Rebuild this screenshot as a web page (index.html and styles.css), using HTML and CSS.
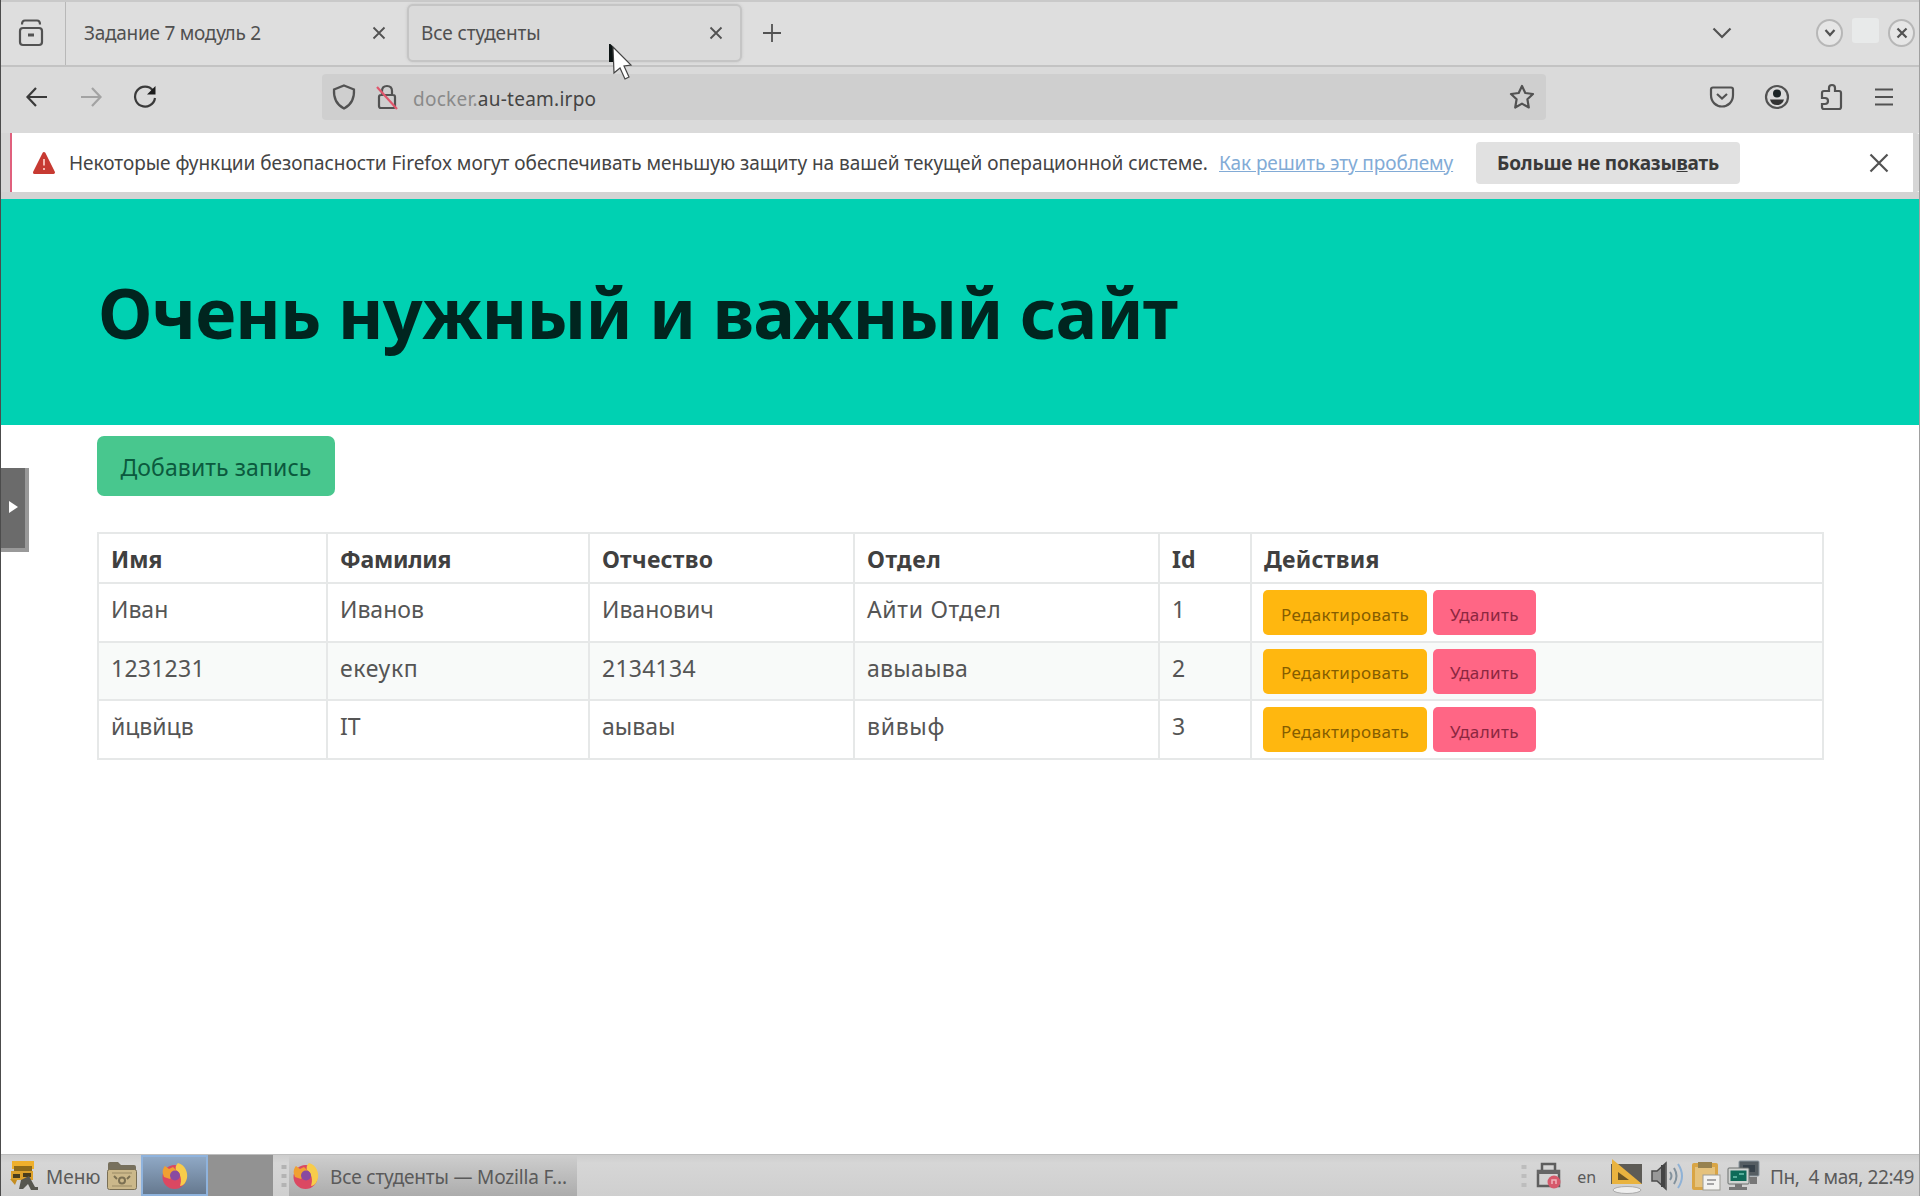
FILE: index.html
```html
<!DOCTYPE html>
<html lang="ru">
<head>
<meta charset="utf-8">
<title>Все студенты</title>
<link rel="stylesheet" href="styles.css">
</head>
<body>
<div class="screen">
  <div class="tabbar">
    <div class="history-btn">
      <svg width="26" height="32" viewBox="0 0 26 32" class="ico"><path d="M4 6.5Q4 2.500 7 2.500H19Q22 2.500 22 6.500M5 10H21Q24 10 24 13V24Q24 27 21 27H5Q2 27 2 24V13Q2 10 5 10Z"/><path d="M10 17H16" stroke-width="3"/></svg>
    </div>
    <div class="tab">
      <span class="t tab-one">Задание 7 модуль 2</span>
      <svg width="14" height="14" viewBox="0 0 14 14" class="ico thin"><path d="M1.500 1.500L12.500 12.500M12.500 1.500L1.500 12.500"/></svg>
    </div>
    <div class="tab active">
      <span class="t tab-two">Все студенты</span>
      <svg width="14" height="14" viewBox="0 0 14 14" class="ico thin"><path d="M1.500 1.500L12.500 12.500M12.500 1.500L1.500 12.500"/></svg>
    </div>
    <svg width="20" height="20" viewBox="0 0 20 20" class="ico thin new-tab"><path d="M10 1V19M1 10H19"/></svg>
    <svg width="20" height="12" viewBox="0 0 20 12" class="ico all-tabs"><path d="M1.500 1.500L10 10L18.500 1.500"/></svg>
    <div class="window-btns">
      <span class="wbtn"><svg width="12" height="8" viewBox="0 0 12 8" class="ico"><path d="M1.500 1L6 6L10.500 1"/></svg></span>
      <span class="wsquare"></span>
      <span class="wbtn"><svg width="12" height="12" viewBox="0 0 12 12" class="ico"><path d="M1.500 1.500L10.500 10.500M10.500 1.500L1.500 10.500"/></svg></span>
    </div>
  </div>

  <div class="toolbar">
    <svg width="24" height="22" viewBox="0 0 24 22" class="ico dark back"><path d="M22 11H2.500M11 2L2.500 11L11 20"/></svg>
    <svg width="24" height="22" viewBox="0 0 24 22" class="ico faded forward"><path d="M2 11H21.500M13 2L21.500 11L13 20"/></svg>
    <svg width="26" height="26" viewBox="0 0 26 26" class="ico dark reload"><path d="M21 6.500A10 10 0 1 0 23 14"/><path d="M23.500 2V10.500H15Z" fill="#1c1c1c" stroke="none"/></svg>
    <div class="urlbar">
      <svg width="24" height="26" viewBox="0 0 24 26" class="ico"><path d="M12 1.500L22 5.500C22.500 14 19 21 12 24.500C5 21 1.500 14 2 5.500Z"/></svg>
      <svg width="24" height="28" viewBox="0 0 24 28" class="ico lock"><path d="M7 12V8Q7 3 12 3Q17 3 17 8V12M6 12H18Q20 12 20 14V23Q20 25 18 25H6Q4 25 4 23V14Q4 12 6 12Z"/><path d="M2 4L22 26" stroke="#e0566c"/></svg>
      <span class="t url"><span class="url-sub">docker.</span>au-team.irpo</span>
      <svg width="26" height="26" viewBox="0 0 26 26" class="ico star"><path d="M13 2L16.300 9L24 10L18.400 15.300L19.800 23.500L13 19.600L6.200 23.500L7.600 15.300L2 10L9.700 9Z" stroke-linejoin="round"/></svg>
    </div>
    <div class="actions">
      <svg width="26" height="24" viewBox="0 0 26 24" class="ico"><path d="M4 2.500H22Q24 2.500 24 4.500V10C24 17 19 21.500 13 21.500S2 17 2 10V4.500Q2 2.500 4 2.500Z"/><path d="M8 9L13 13.500L18 9"/></svg>
      <svg width="26" height="26" viewBox="0 0 26 26" class="ico"><circle cx="13" cy="13" r="11"/><circle cx="13" cy="9.500" r="4" fill="#1c2426" stroke="none"/><path d="M6 15.500H20Q18.500 21 13 21T6 15.500Z" fill="#333" stroke="none"/></svg>
      <svg width="26" height="28" viewBox="0 0 26 28" class="ico"><path d="M3 10Q3 8 5 8H10V5Q10 2 13 2T16 5V8H20Q22 8 22 10V24Q22 26 20 26H5Q3 26 3 24V21H6Q9 21 9 18T6 15H3Z"/></svg>
      <svg width="20" height="20" viewBox="0 0 20 20" class="ico"><path d="M1 2.500H19M1 10H19M1 17.500H19"/></svg>
    </div>
  </div>

  <div class="notice">
    <svg width="24" height="24" viewBox="0 0 24 24"><path d="M12 2.500L21.500 21.500H2.500Z" fill="#c73a32" stroke="#c73a32" stroke-width="3" stroke-linejoin="round"/><path d="M12 8V14.500M12 17V19" stroke="#f3b8b0" stroke-width="2"/></svg>
    <span class="t notice-text">Некоторые функции безопасности Firefox могут обеспечивать меньшую защиту на вашей текущей операционной системе.</span>
    <a class="t notice-link">Как решить эту проблему</a>
    <span class="notice-btn"><span class="t notice-label">Больше не показы<u>в</u>ать</span></span>
    <svg width="20" height="20" viewBox="0 0 20 20" class="ico notice-close"><path d="M1.500 1.500L18.500 18.500M18.500 1.500L1.500 18.500"/></svg>
  </div>

  <div class="page">
    <div class="hero"><h1 class="t hero-title">Очень нужный и важный сайт</h1></div>
    <div class="content">
      <span class="add-btn"><span class="t add-label">Добавить запись</span></span>
      <table class="grid">
        <colgroup><col class="c1"><col class="c2"><col class="c3"><col class="c4"><col class="c5"><col class="c6"></colgroup>
        <tr class="head"><th>Имя</th><th class="snug">Фамилия</th><th class="loose">Отчество</th><th class="wide">Отдел</th><th>Id</th><th class="loose">Действия</th></tr>
        <tr><td>Иван</td><td>Иванов</td><td>Иванович</td><td class="wide">Айти Отдел</td><td>1</td><td><div class="row-btns"><span class="btn edit">Редактировать</span><span class="btn del">Удалить</span></div></td></tr>
        <tr class="even"><td class="loose">1231231</td><td class="wide">екеукп</td><td class="loose">2134134</td><td class="loose">авыаыва</td><td>2</td><td><div class="row-btns"><span class="btn edit">Редактировать</span><span class="btn del">Удалить</span></div></td></tr>
        <tr><td>йцвйцв</td><td>IT</td><td>аываы</td><td class="wide">вйвыф</td><td>3</td><td><div class="row-btns"><span class="btn edit">Редактировать</span><span class="btn del">Удалить</span></div></td></tr>
      </table>
    </div>
  </div>

  <div class="taskbar">
    <svg width="30" height="32" viewBox="0 0 30 32" class="menu-ico"><path d="M3 1H25V9H3Z" fill="#efb02c"/><path d="M5 6H23V11H5Z" fill="#8d6a1a"/><path d="M2 11H24V20H2Z" fill="#dca02a"/><path d="M4 14H11V18H4ZM14 13H22V17H14Z" fill="#4a3d1c"/><path d="M12 20L20 16L26 27H29V30H22L19 24L14 29H10Z" fill="#56564f"/><path d="M1 19L8 20L6 25Z" fill="#c48d22"/></svg>
    <span class="t menu-label">Меню</span>
    <svg width="32" height="30" viewBox="0 0 32 30" class="folder-ico"><path d="M2 3Q2 1 4 1H12L15 4H28Q30 4 30 6V12H2Z" fill="#77705d"/><rect x="1.500" y="8.500" width="29" height="20" rx="2" fill="#cbb88a" stroke="#796f55"/><path d="M6 12H26M6 25H26" stroke="#998a65"/><path d="M8 15L11 18M24 15L21 18" stroke="#7b7052" stroke-width="2"/><circle cx="16" cy="19.500" r="3" fill="none" stroke="#7b7052" stroke-width="2"/></svg>
    <span class="launcher">
      <svg width="28" height="28" viewBox="0 0 28 28"><use href="#fox"/></svg>
    </span>
    <span class="pager"></span>
    <svg width="6" height="26" viewBox="0 0 6 26" class="grip"><path d="M3 2V6M3 11V15M3 20V24" stroke="#b3b3b3" stroke-width="5"/></svg>
    <span class="task">
      <svg width="28" height="28" viewBox="0 0 28 28"><g id="fox"><circle cx="13.500" cy="15" r="12" fill="#db4862"/><path d="M2 12C1 8 3 5 4 4L8 7L12 5L16 9L9 17L3 15Z" fill="#f0a032"/><path d="M17 1C24 3 27 10 26 16C25 21 22 24 19 24C21 18 20 12 15 8C14 5 15 3 17 1Z" fill="#f7cc4b"/><circle cx="14" cy="13.500" r="5" fill="#8a4aa0"/></g></svg>
      <span class="t task-label">Все студенты — Mozilla F...</span>
    </span>
    <div class="tray">
      <svg width="6" height="26" viewBox="0 0 6 26"><path d="M3 2V6M3 11V15M3 20V24" stroke="#bdbdbd" stroke-width="5"/></svg>
      <svg width="28" height="30" viewBox="0 0 28 30" class="printer"><path d="M7 9V3H20V9M3 10H24V25H3Z" fill="none" stroke="#5e5e5e" stroke-width="2.500"/><path d="M2 9H25V13H2Z" fill="#666"/><circle cx="19" cy="21" r="6.500" fill="#d6596b"/><path d="M17 23V19H21V23" fill="none" stroke="#efb4bc" stroke-width="1.500"/></svg>
      <span class="t lang">en</span>
      <svg width="34" height="36" viewBox="0 0 34 36" class="monitor"><rect x="2" y="6" width="31" height="20" fill="#5d5b56"/><path d="M3 1L33 26H3Z" fill="#e9b33f"/><path d="M9 14L20 22H9Z" fill="#6a5425"/><ellipse cx="18" cy="32" rx="14" ry="3.500" fill="#eee" stroke="#aaa"/></svg>
      <svg width="34" height="32" viewBox="0 0 34 32" class="speaker"><path d="M2 11H7L16 3V29L7 21H2Z" fill="#999" stroke="#4c4c4c" stroke-width="1.500"/><path d="M13 5V27" stroke="#444" stroke-width="4"/><path d="M20 12Q23 16 20 20M24 8Q29 16 24 24" fill="none" stroke="#82919c" stroke-width="2"/><path d="M28 4Q36 16 28 28" fill="none" stroke="#8fb2d6" stroke-width="2"/></svg>
      <svg width="32" height="32" viewBox="0 0 32 32" class="clip"><rect x="2" y="3" width="26" height="27" rx="2" fill="#d9a545"/><rect x="5" y="7" width="20" height="20" fill="#e5c27c"/><path d="M8 2H22V8H8Z" fill="#97824f"/><rect x="13" y="15" width="17" height="15" fill="#f3f3f0" stroke="#9b9b95"/><path d="M17 20H26M17 24H24" stroke="#a5a5a5" stroke-width="2"/></svg>
      <svg width="34" height="34" viewBox="0 0 34 34" class="net"><rect x="13" y="2" width="20" height="15" rx="1" fill="#555d62" stroke="#8b979f"/><path d="M17 6H29V13H17Z" fill="#36414a"/><path d="M23 18H31V25H24Z" fill="#777"/><rect x="2" y="9" width="21" height="16" rx="1" fill="#d0d3d1" stroke="#6a6e6c"/><rect x="4.500" y="11.500" width="16" height="10.500" fill="#0f6b58"/><path d="M7 18H11M13 15H18" stroke="#6fc4ae" stroke-width="1.500"/><path d="M9 25H16V28H21V31H3V28H9Z" fill="#777"/></svg>
      <span class="t clock">Пн,&nbsp; 4 мая, 22:49</span>
    </div>
  </div>

  <div class="drawer"><svg width="9" height="12" viewBox="0 0 9 12"><path d="M0 0L9 6L0 12Z" fill="#fff"/></svg></div>
  <svg class="cursor" width="26" height="38" viewBox="0 0 26 38"><path d="M2 1L4 3V17H2Z" fill="#0c1414" stroke="#0c1414" stroke-width="2"/><path d="M5 3L23 21L16 22L21 33L17 35L12 24L6 29Z" fill="#fff" stroke="#444" stroke-width="1.200"/></svg>
</div>
</body>
</html>
```
FILE: styles.css
```css
* { box-sizing: border-box; }
body { margin: 0; font-family: "Noto Sans", "Open Sans", sans-serif; color: #444; }
svg { display: block; flex: none; }

.screen { position: relative; display: flex; flex-direction: column; width: 1920px; height: 1196px; background: #fff; overflow: hidden; }
.screen::after { content: ""; position: absolute; inset: 0; border-left: 1px solid #4c4c4c; border-right: 1px solid #a0a0a0; pointer-events: none; }
.t { white-space: nowrap; }
.ico { fill: none; stroke: #525252; stroke-width: 2.2; }
.ico.thin { stroke-width: 1.8; }
.ico.dark { stroke: #3a3a3a; }
.ico.faded { stroke: #a3a3a3; }

.tabbar { display: flex; align-items: center; height: 67px; padding-bottom: 2px; background: #dedede; border-top: 2px solid #c9c9c9; border-bottom: 2px solid #c3c3c3; }
.history-btn { display: flex; align-items: center; justify-content: flex-end; width: 66px; height: 63px; margin-bottom: -2px; padding-right: 21px; border-right: 1px solid #b8b8b8; }
.tab { display: flex; align-items: center; justify-content: space-between; width: 341px; height: 58px; padding: 0 21px 0 18px; font-size: 19px; color: #505050; }
.tab-one { letter-spacing: -0.26px; }
.tab-two { letter-spacing: -0.1px; }
.tab.active { width: 335px; padding: 0 17px 0 12px; background: #dadada; border: 2px solid #c5c5c5; border-radius: 6px; box-shadow: 0 0 3px #c6c6c6; }
.new-tab { margin-left: 20px; }
.all-tabs { margin-left: auto; }
.window-btns { display: flex; align-items: center; gap: 9px; margin: 0 5px 0 84px; }
.wbtn { display: flex; align-items: center; justify-content: center; width: 27px; height: 28px; border: 2px solid #b7b7b7; border-radius: 50%; background: #e6e6e6; }
.wsquare { width: 27px; height: 25px; border-radius: 3px; background: #e8eaea; margin-top: -4px; }

.toolbar { display: flex; align-items: center; height: 66px; padding-bottom: 6px; background: #dadada; }
.back { margin-left: 25px; }
.forward { margin-left: 30px; }
.reload { margin-left: 29px; }
.urlbar { display: flex; align-items: center; width: 1224px; height: 46px; margin-left: 164px; padding-left: 10px; background: #cfcfcf; border-radius: 4px; }
.lock { margin-left: 19px; }
.url { margin: 3px 0 0 14px; font-size: 19px; letter-spacing: 0.25px; color: #444; }
.url-sub { color: #8a8a8a; }
.star { margin: 0 11px 0 auto; }
.actions { display: flex; align-items: center; gap: 29px; margin: 0 26px 0 auto; }

.notice { display: flex; align-items: center; height: 59px; padding-left: 22px; background: #fff; border: solid #d6d6d6; border-width: 0 7px 0 10px; border-radius: 0 4px 4px 0; box-shadow: inset 2px 0 #e0607d; flex: none; font-size: 19px; }
.notice-text { width: 1139px; margin-left: 13px; letter-spacing: -0.03px; }
.notice-link { width: 234px; margin-left: 11px; letter-spacing: -0.1px; color: #82abd6; text-decoration: underline; }
.notice-btn { display: flex; align-items: center; justify-content: center; width: 264px; height: 42px; margin-left: 23px; border-radius: 4px; background: #e1e1e1; font-weight: 700; color: #3a3a3a; letter-spacing: -0.2px; }
.notice-close { margin: 0 24px 0 auto; }

.page { flex: 1; min-height: 0; border-top: 7px solid #d3d3d3; }
.hero { display: flex; align-items: center; height: 226px; padding-left: 98px; background: #00d1b2; }
.hero-title { margin: 0; font-size: 70px; font-weight: 700; line-height: 80px; letter-spacing: -0.92px; color: #00251f; }
.content { padding: 11px 96px 0 97px; }
.add-btn { display: flex; align-items: center; justify-content: center; width: 238px; height: 60px; padding-top: 2px; border-radius: 7px; background: #48c78e; font-size: 23px; letter-spacing: 0.1px; color: #0b5a3e; }
.grid { width: 1727px; margin-top: 36px; border-collapse: collapse; table-layout: fixed; font-size: 23px; line-height: 34px; color: #555; }
.c1 { width: 229px; } .c2 { width: 262px; } .c3 { width: 265px; } .c4 { width: 305px; } .c5 { width: 92px; } .c6 { width: 572px; }
.grid th, .grid td { height: 58.6px; padding: 8px 0 0 12px; border: 2px solid #e6e8e8; text-align: left; vertical-align: top; white-space: nowrap; }
.grid th { height: 50px; color: #404040; }
.grid td:last-child { padding-top: 6px; }
.grid .snug { letter-spacing: -0.25px; }
.grid .loose { letter-spacing: 0.25px; }
.grid .wide { letter-spacing: 0.7px; }
.even { background: #f8faf9; }
.row-btns { display: flex; gap: 6px; margin-left: -1px; }
.btn { display: flex; align-items: center; justify-content: center; height: 45px; padding-top: 4px; border-radius: 5px; font-size: 17px; letter-spacing: 0.4px; }
.edit { width: 164px; background: #ffb70f; color: #855d00; }
.del { width: 103px; background: #ff6685; color: #8c2740; }

.taskbar { display: flex; align-items: center; height: 42px; background: linear-gradient(#cdcdcd, #d6d6d6 20%, #cfcfcf); border-top: 1px solid #bebebe; font-size: 19px; color: #5a5a5a; }
.menu-ico { margin-left: 9px; }
.menu-label { width: 60px; margin: 2px 0 0 7px; }
.launcher { display: flex; align-items: center; justify-content: center; width: 67px; height: 41px; margin-left: 3px; border: 2px solid #8fb3dd; background: linear-gradient(#8fa8c5, #66798f); }
.pager { width: 65px; height: 41px; background: #929292; }
.grip { margin-left: 8px; }
.task { display: flex; align-items: center; width: 288px; height: 41px; margin-left: 2px; padding-left: 3px; background: linear-gradient(#cecece, #acacac); }
.task-label { margin: 2px 0 0 10px; letter-spacing: -0.17px; }
.tray { display: flex; align-items: center; margin-left: auto; padding-right: 6px; }
.printer { margin-left: 8px; }
.lang { margin: 2px 0 0 14px; font-size: 16px; }
.monitor { margin-left: 13px; }
.speaker { margin-left: 7px; }
.clip { margin-left: 6px; }
.net { margin-left: 4px; }
.clock { margin: 2px 0 0 10px; letter-spacing: -0.42px; }

.drawer { position: absolute; left: 0; top: 468px; display: flex; align-items: center; width: 29px; height: 84px; padding: 0 0 2px 9px; background: #6b6b6b; border: solid #999; border-width: 0 4px 4px 0; }
.cursor { position: absolute; left: 608px; top: 44px; }
```
